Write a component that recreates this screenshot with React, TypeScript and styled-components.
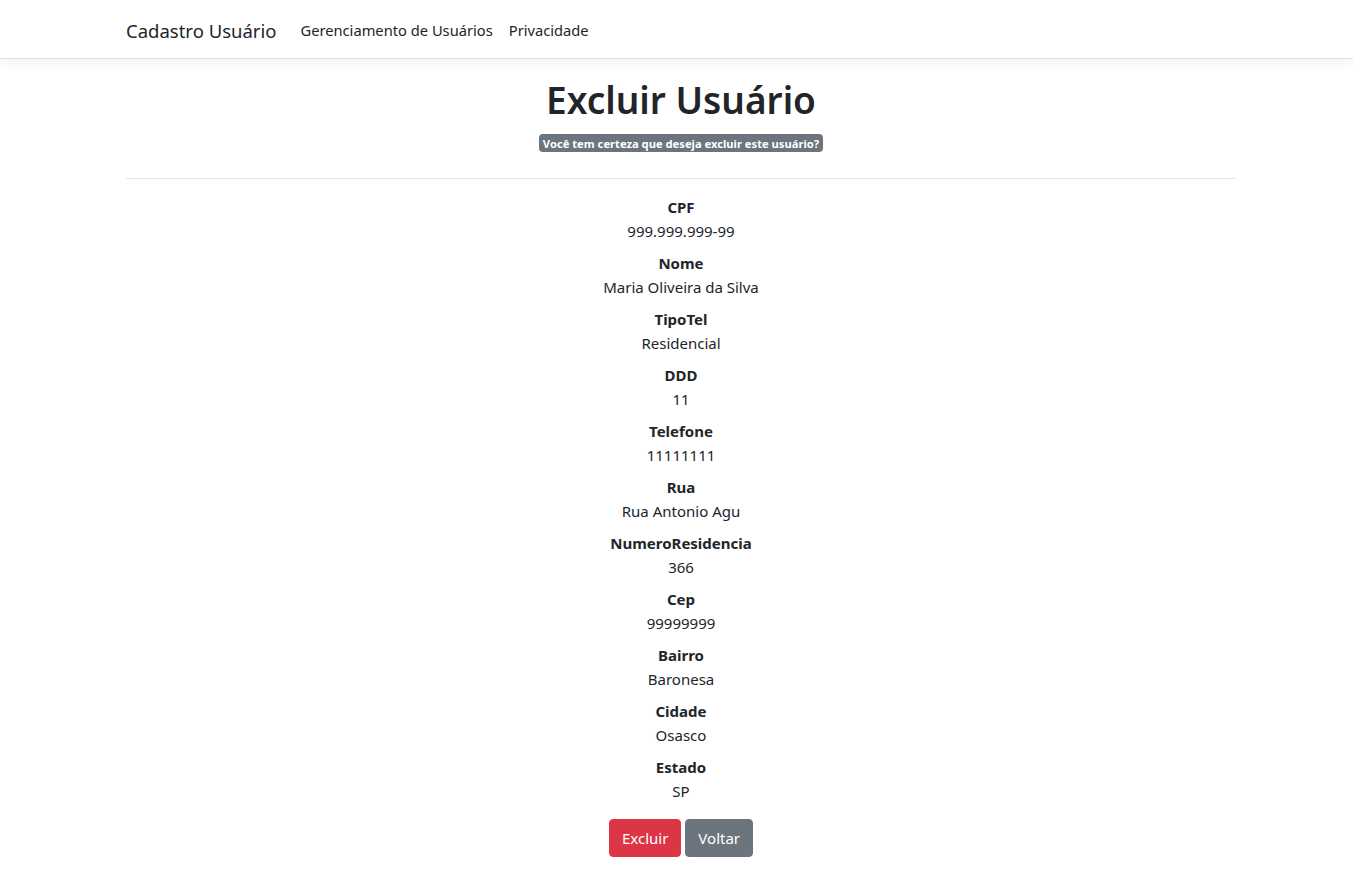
import React from "react";
import styled, { createGlobalStyle } from "styled-components";

const Global = createGlobalStyle`
  html, body { margin: 0; padding: 0; background: #fff; }
  body {
    font-family: "Noto Sans", "Open Sans", sans-serif;
    font-size: 16px;
    line-height: 1.5;
    color: #212529;
  }
  * { box-sizing: border-box; }
`;

const Page = styled.div`
  padding-left: 9px;
`;

const NavBar = styled.nav`
  height: 59px;
  background: #fff;
  border-bottom: 1px solid #dee2e6;
  box-shadow: 0 4px 12px rgba(0, 0, 0, 0.05);
  display: flex;
  align-items: center;
  padding-top: 3px;
  margin-left: -9px;
  padding-left: 9px;
`;

const Container = styled.div`
  width: 1110px;
  margin: 0 auto;
`;

const NavInner = styled(Container)`
  display: flex;
  align-items: center;
`;

const Brand = styled.a`
  font-size: 18.5px;
  color: #212529;
  margin-right: 16px;
  text-decoration: none;
`;

const NavLink = styled.a`
  font-size: 14.7px;
  color: #212529;
  padding: 0 8px;
  text-decoration: none;
`;

const Main = styled(Container)`
  padding-top: 17px;
  text-align: center;
`;

const Title = styled.h1`
  font-size: 37px;
  font-weight: 600;
  line-height: 48px;
  margin: 0 0 6px;
`;

const BadgeLine = styled.div`
  line-height: 24px;
  margin-bottom: 24px;
`;

const Badge = styled.span`
  display: inline-block;
  background: #6c757d;
  color: #fff;
  font-size: 11.2px;
  font-weight: 700;
  line-height: 1;
  padding: 4px 4px 3px;
  border-radius: 4px;
  vertical-align: 0px;
`;

const Rule = styled.hr`
  border: 0;
  border-top: 1px solid rgba(0, 0, 0, 0.1);
  margin: 0 0 16px;
`;

const List = styled.dl`
  margin: 0 0 16px;
`;

const Term = styled.dt`
  font-weight: 700;
  font-size: 15px;
  line-height: 24px;
`;

const Desc = styled.dd`
  margin: 0 0 8px;
  font-size: 15px;
  line-height: 24px;
`;

const Actions = styled.div`
  display: flex;
  justify-content: center;
  gap: 4px;
`;

const Button = styled.button<{ $variant: "danger" | "secondary" }>`
  font-family: inherit;
  font-size: 15px;
  line-height: 24px;
  padding: 6px 12px;
  height: 38px;
  border-radius: 4px;
  border: 1px solid ${(p) => (p.$variant === "danger" ? "#dc3545" : "#6c757d")};
  background: ${(p) => (p.$variant === "danger" ? "#dc3545" : "#6c757d")};
  color: #fff;
`;

const fields: [string, string][] = [
  ["CPF", "999.999.999-99"],
  ["Nome", "Maria Oliveira da Silva"],
  ["TipoTel", "Residencial"],
  ["DDD", "11"],
  ["Telefone", "11111111"],
  ["Rua", "Rua Antonio Agu"],
  ["NumeroResidencia", "366"],
  ["Cep", "99999999"],
  ["Bairro", "Baronesa"],
  ["Cidade", "Osasco"],
  ["Estado", "SP"],
];

export default function App() {
  return (
    <Page>
      <Global />
      <NavBar>
        <NavInner>
          <Brand>Cadastro Usuário</Brand>
          <NavLink>Gerenciamento de Usuários</NavLink>
          <NavLink>Privacidade</NavLink>
        </NavInner>
      </NavBar>
      <Main>
        <Title>Excluir Usuário</Title>
        <BadgeLine>
          <Badge>Você tem certeza que deseja excluir este usuário?</Badge>
        </BadgeLine>
        <Rule />
        <List>
          {fields.map(([k, v]) => (
            <React.Fragment key={k}>
              <Term>{k}</Term>
              <Desc>{v}</Desc>
            </React.Fragment>
          ))}
        </List>
        <Actions>
          <Button $variant="danger">Excluir</Button>
          <Button $variant="secondary">Voltar</Button>
        </Actions>
      </Main>
    </Page>
  );
}
